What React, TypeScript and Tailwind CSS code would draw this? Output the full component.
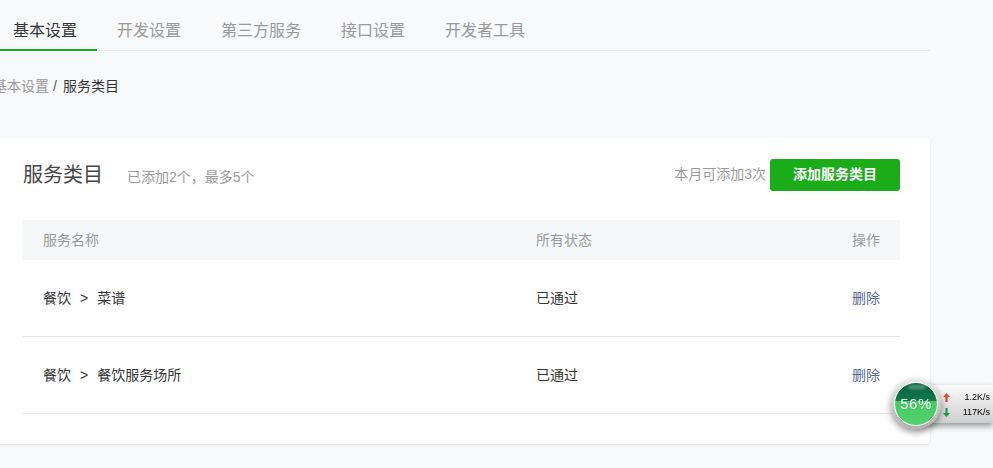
const FONT = "font-['Liberation_Sans','Noto_Sans_CJK_SC',sans-serif]";

const tabs = ['基本设置', '开发设置', '第三方服务', '接口设置', '开发者工具'];

const rows = [
  { path: ['餐饮', '菜谱'], status: '已通过' },
  { path: ['餐饮', '餐饮服务场所'], status: '已通过' },
];

function NetWidget() {
  return (
    <div className="fixed left-[891px] top-[378px] h-[52px] w-[102px]">
      <div className="absolute left-[26px] top-[7px] flex h-[38px] w-[76px] flex-col justify-center rounded-l-sm bg-gradient-to-b from-[#fbfbfb] to-[#cfcfcf] pt-[1px] pl-[26px] pr-[3px] text-[9px] leading-[15px] text-black shadow-[0_3px_6px_rgba(0,0,0,0.4)]">
        <div className="flex items-center justify-between">
          <svg width="7" height="9" viewBox="0 0 7 9"><path d="M3.5 0 7 4H4.6v5H2.4V4H0z" fill="#e8452c" /></svg>
          <span>1.2K/s</span>
        </div>
        <div className="flex items-center justify-between">
          <svg width="7" height="9" viewBox="0 0 7 9"><path d="M3.5 9 7 5H4.6V0H2.4v5H0z" fill="#1f9a50" /></svg>
          <span>117K/s</span>
        </div>
      </div>
      <div className="absolute left-0 top-[1px] h-[50px] w-[50px] rounded-full bg-gradient-to-b from-[#e8e8e8] to-[#b0b0b0] p-[3px] shadow-[0_3px_7px_rgba(0,0,0,0.45)]">
        <div className="relative flex h-full w-full items-center justify-center overflow-hidden rounded-full border border-white bg-[linear-gradient(to_bottom,#07603e_0%,#0f7a50_44%,#45c863_44%,#50d46b_100%)]">
          <div className="absolute left-[13px] top-[2px] h-[4px] w-[18px] rounded-full bg-white/30 blur-[1.5px]" />
          <span className="relative text-[15px] tracking-[0.5px] text-white">56%</span>
        </div>
      </div>
    </div>
  );
}

export default function App() {
  return (
    <div className={`h-[468px] w-[993px] overflow-hidden bg-[#f8f9fb] ${FONT}`}>
      <div className="ml-[-7px] w-[937px]">
        <nav className="flex h-[51px] border-b border-[#e7e7eb]">
          {tabs.map((t, i) => (
            <div
              key={t}
              className={`-mb-px flex h-[51px] items-center border-b-2 px-5 pt-[13px] text-base ${
                i === 0 ? 'border-[#1aad19] text-[#353535]' : 'border-transparent text-[#9a9a9a]'
              }`}
            >
              {t}
            </div>
          ))}
        </nav>

        <div className="flex h-[87px] pt-[25px] text-sm leading-5 text-[#9a9a9a]">
          <span>基本设置</span>
          <span className="mx-1 w-[6px] text-[#555555]">/</span>
          <span className="text-[#353535]">服务类目</span>
        </div>

        <section className="h-[306px] rounded-b-sm bg-white px-[30px] pt-[21px] shadow-[0_1px_2px_rgba(0,0,0,0.12)]">
          <header className="flex h-[61px] items-start justify-between">
            <div className="flex items-center pt-[2px]">
              <h2 className="text-[20px] leading-[28px] font-normal text-[#454545]">服务类目</h2>
              <span className="ml-6 pt-[3px] text-sm text-[#9a9a9a]">已添加2个，最多5个</span>
            </div>
            <div className="flex items-center">
              <span className="mr-1 mb-[2px] text-sm text-[#9a9a9a]">本月可添加3次</span>
              <button className="h-8 w-[130px] rounded-[3px] bg-[#1aad19] pb-[2px] text-sm font-bold text-white">
                添加服务类目
              </button>
            </div>
          </header>

          <div className="flex h-10 items-center bg-[#f6f7f9] px-5 text-sm text-[#9a9a9a]">
            <div className="w-[493px]">服务名称</div>
            <div className="flex-1">所有状态</div>
            <div>操作</div>
          </div>

          {rows.map((r) => (
            <div key={r.path[1]} className="flex h-[77px] items-center border-b border-[#e7e7eb] px-5 text-sm text-[#353535]">
              <div className="flex w-[493px]">
                <span>{r.path[0]}</span>
                <span className="mx-[9px]">&gt;</span>
                <span>{r.path[1]}</span>
              </div>
              <div className="flex-1">{r.status}</div>
              <a className="text-[#576b95]">删除</a>
            </div>
          ))}
        </section>
      </div>
      <NetWidget />
    </div>
  );
}
